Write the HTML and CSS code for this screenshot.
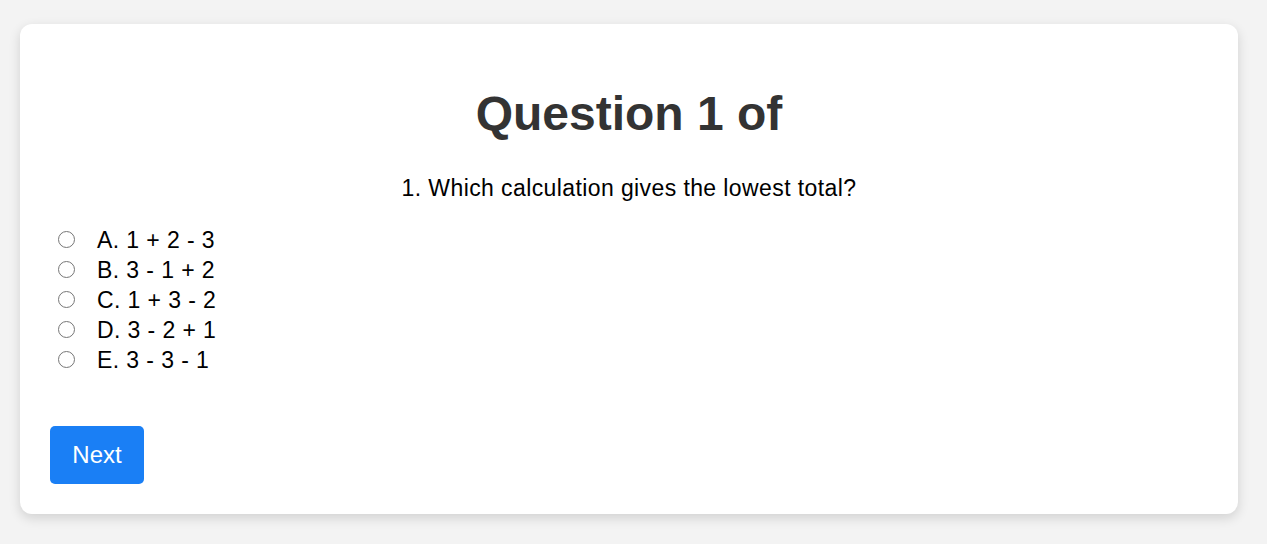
FILE: index.html
```html
<!DOCTYPE html>
<html lang="en">
<head>
<meta charset="utf-8">
<title>Quiz</title>
<link rel="stylesheet" href="styles.css">
</head>
<body>
<div class="card">
  <h1 class="title">Question 1 of</h1>
  <p class="question">1. Which calculation gives the lowest total?</p>
  <div class="options">
    <label class="option"><input type="radio" name="q1" class="radio"><span>A. 1 + 2 - 3</span></label>
    <label class="option"><input type="radio" name="q1" class="radio"><span>B. 3 - 1 + 2</span></label>
    <label class="option"><input type="radio" name="q1" class="radio"><span>C. 1 + 3 - 2</span></label>
    <label class="option"><input type="radio" name="q1" class="radio"><span>D. 3 - 2 + 1</span></label>
    <label class="option"><input type="radio" name="q1" class="radio"><span>E. 3 - 3 - 1</span></label>
  </div>
  <button class="next">Next</button>
</div>
</body>
</html>
```

FILE: styles.css
```css
html, body {
  margin: 0;
  padding: 0;
  background: #f3f3f3;
  font-family: "Liberation Sans", Arial, sans-serif;
}
body {
  padding: 24px 29px 30px 20px;
}
.card {
  background: #fff;
  border-radius: 12px;
  box-shadow: 0 4px 12px rgba(0, 0, 0, 0.14);
  padding: 30px 30px 30px 30px;
  height: 430px;
}
.title {
  margin: 32px 0 0;
  text-align: center;
  font-size: 48px;
  font-weight: bold;
  color: #333;
  line-height: 56px;
}
.question {
  text-align: center;
  font-size: 23px;
  letter-spacing: 0.4px;
  color: #000;
  margin: 33px 0 0;
  line-height: 26px;
}
.options {
  margin-top: 24px;
  display: flex;
  flex-direction: column;
}
.option {
  display: flex;
  align-items: center;
  height: 30px;
  font-size: 23px;
  letter-spacing: 0.4px;
  color: #000;
}
.radio {
  width: 17px;
  height: 17px;
  margin: -2px 22px 0 8px;
}
.next {
  margin-top: 51px;
  background: #1a7ff5;
  color: #fff;
  border: none;
  border-radius: 5px;
  width: 94px;
  height: 58px;
  font-family: "Liberation Sans", Arial, sans-serif;
  font-size: 24px;
}
```
